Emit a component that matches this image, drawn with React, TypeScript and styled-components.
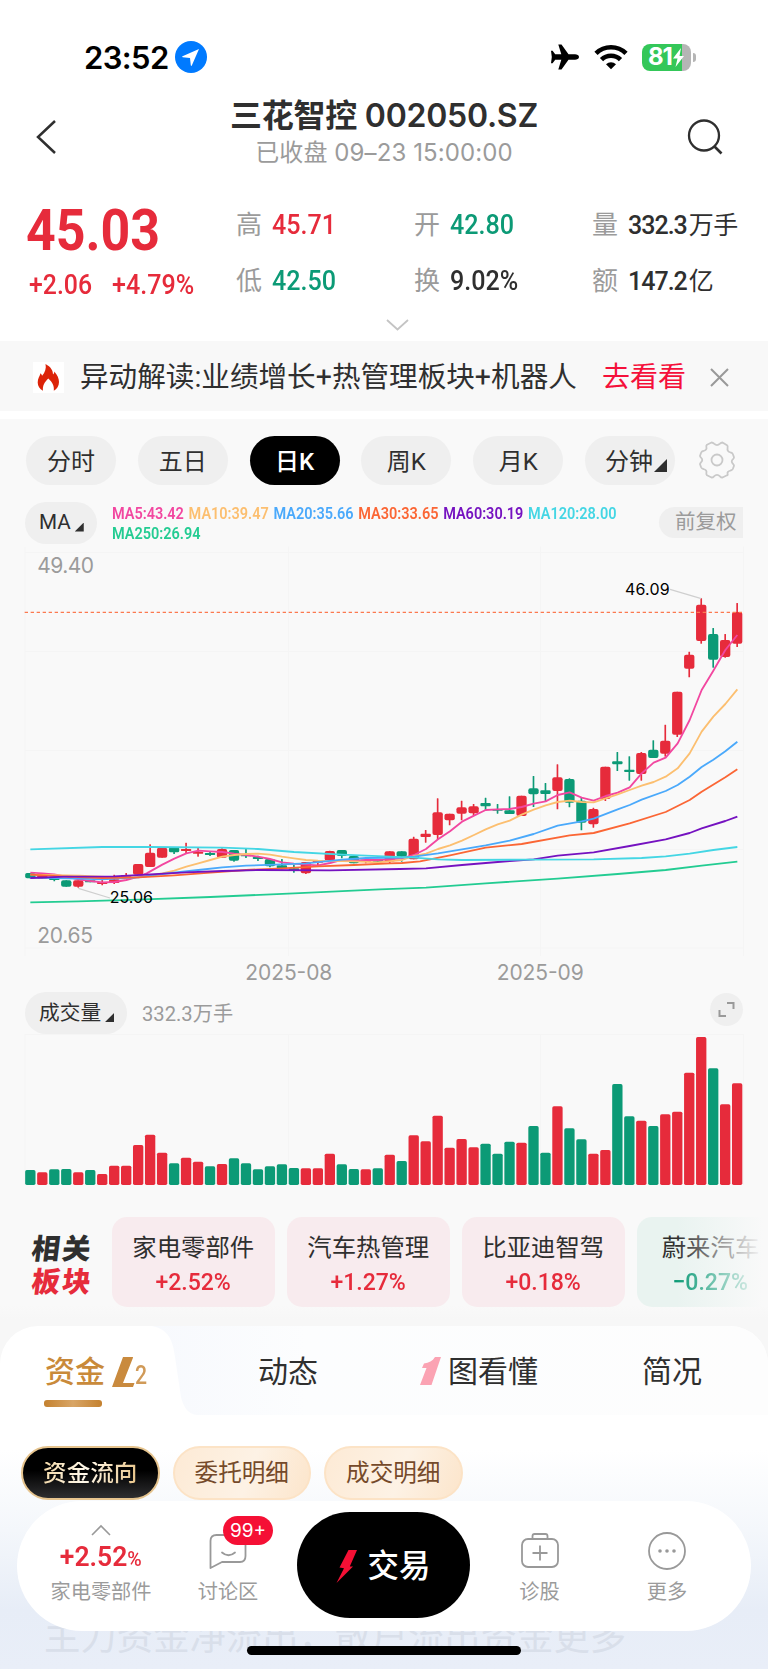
import React from "react";
import styled, { createGlobalStyle } from "styled-components";

const RED = "#e62b3b";
const GREEN = "#0c9a76";
const INK = "#2f2f2f";
const GREY = "#9b9b9b";

const Global = createGlobalStyle`
  * { box-sizing: border-box; }
  body {
    margin: 0;
    background: #fff;
    color: ${INK};
    font-family: Roboto, "Noto Sans CJK SC", sans-serif;
    -webkit-font-smoothing: antialiased;
  }
`;

const Page = styled.div`
  position: relative;
  width: 768px;
  height: 1669px;
  overflow: hidden;
  display: flex;
  flex-direction: column;
  background: linear-gradient(180deg, #fff 0, #fff 1450px, #f4f7fb 1530px, #e7edf7 1610px, #e9eef8 1669px);
`;

/* Text squeezed horizontally to resemble a narrow DIN face. */
const Num = styled.span<{ $size: number; $w: number; $s?: number; $color?: string; $weight?: number }>`
  flex: none;
  width: ${(p) => p.$w}px;
  font-size: ${(p) => p.$size}px;
  font-weight: ${(p) => p.$weight ?? 500};
  line-height: 1;
  color: ${(p) => p.$color ?? INK};
  white-space: nowrap;
  transform: scaleX(${(p) => p.$s ?? 0.92});
  transform-origin: left center;
`;

/* ---------- status bar ---------- */
const StatusBar = styled.div`
  flex: none;
  height: 90px;
  padding: 24px 72px 0 84px;
  display: flex;
  align-items: center;
`;
const Clock = styled.span`
  width: 91px;
  font: 600 31px/1 Inter, sans-serif;
  letter-spacing: -0.6px;
  color: #000;
`;
const Spacer = styled.div`
  flex: 1;
`;
const StatusIcons = styled.div`
  display: flex;
  align-items: center;
  gap: 14px;
`;
const Battery = styled.div`
  width: 49px;
  height: 27px;
  border-radius: 8px;
  background: linear-gradient(90deg, #34c759 81%, #b5b5b5 81%);
  display: flex;
  align-items: center;
  padding-left: 6px;
  color: #fff;
  font: 700 24px/1 Inter, sans-serif;
  letter-spacing: -1px;
`;
const BatteryTip = styled.div`
  width: 3px;
  height: 9px;
  margin-left: -12px;
  border-radius: 0 4px 4px 0;
  background: #b5b5b5;
`;

/* ---------- header ---------- */
const Header = styled.header`
  flex: none;
  height: 100px;
  padding: 0 45px 0 35px;
  display: flex;
  align-items: flex-start;
  justify-content: space-between;
  & > svg { margin-top: 29px; }
`;
const Titles = styled.div`
  display: flex;
  flex-direction: column;
  align-items: center;
  margin-left: 24px;
`;
const Title = styled.h1`
  margin: 8px 0 0;
  font: 600 32px/36px Inter, "Noto Sans CJK SC", sans-serif;
  white-space: nowrap;
  letter-spacing: -0.25px;
`;
const Subtitle = styled.div`
  margin-top: 4px;
  font: 400 24px/30px Inter, "Noto Sans CJK SC", sans-serif;
  letter-spacing: 0.1px;
  color: ${GREY};
  white-space: nowrap;
`;

/* ---------- quote ---------- */
const Quote = styled.section`
  flex: none;
  position: relative;
  height: 151px;
  padding: 7px 0 0 26px;
  display: flex;
`;
const PriceBox = styled.div`
  width: 210px;
  display: flex;
  flex-direction: column;
`;
const Price = styled.div`
  height: 66px;
  display: flex;
  align-items: center;
`;
const Change = styled.div`
  height: 44px;
  padding-left: 3px;
  display: flex;
  align-items: center;
  gap: 20px;
`;
const Stats = styled.div`
  display: grid;
  grid-template-columns: 178px 178px 160px;
  grid-template-rows: 56px 56px;
  height: 112px;
`;
const Stat = styled.div`
  display: flex;
  align-items: center;
  gap: 10px;
  white-space: nowrap;
`;
const StatLabel = styled.span`
  font-size: 26px;
  line-height: 1;
  color: ${GREY};
`;
const Expand = styled.svg`
  position: absolute;
  left: 386px;
  top: 129px;
`;

/* ---------- banner ---------- */
const Banner = styled.section`
  flex: none;
  height: 70px;
  margin-bottom: 8px;
  padding: 3px 39px 0 33px;
  background: #f8f8f8;
  display: flex;
  align-items: center;
`;
const FireTile = styled.div`
  width: 31px;
  height: 31px;
  background: #fff;
  display: flex;
  justify-content: center;
  align-items: center;
`;
const BannerText = styled.span`
  width: 521px;
  padding-left: 16px;
  font-size: 28.6px;
  line-height: 1;
  white-space: nowrap;
`;
const BannerLink = styled.span`
  width: 108px;
  font-size: 28px;
  line-height: 1;
  color: #f5103a;
`;

/* ---------- chart panel ---------- */
const ChartPanel = styled.section`
  flex: none;
  height: 907px;
  background: linear-gradient(180deg, #f9f9f9 0, #f9f9f9 886px, #f7f7f7 900px);
  display: flex;
  flex-direction: column;
`;
const Periods = styled.div`
  height: 83px;
  padding: 17px 33px 0 26px;
  display: flex;
  align-items: flex-start;
  gap: 21.8px;
`;
const Period = styled.div<{ $active?: boolean }>`
  flex: none;
  width: 90px;
  height: 49px;
  padding-top: 3px;
  border-radius: 25px;
  background: ${(p) => (p.$active ? "#000" : "#efefef")};
  color: ${(p) => (p.$active ? "#fff" : INK)};
  font-size: 24px;
  font-weight: ${(p) => (p.$active ? 500 : 400)};
  line-height: 1;
  display: flex;
  align-items: center;
  justify-content: center;
  white-space: nowrap;
`;
const Corner = styled.i<{ $size: number }>`
  align-self: center;
  width: ${(p) => p.$size}px;
  height: ${(p) => p.$size}px;
  margin: ${(p) => (p.$size > 10 ? 7 : p.$size)}px 0 0 ${(p) => (p.$size > 10 ? 1 : 4)}px;
  background: ${INK};
  clip-path: polygon(100% 0, 100% 100%, 0 100%);
`;
const Legend = styled.div`
  height: 41px;
  padding: 0 25px;
  display: flex;
  align-items: center;
`;
const Picker = styled.div<{ $w: number }>`
  flex: none;
  width: ${(p) => p.$w}px;
  height: 42px;
  padding-left: 14px;
  border-radius: 21px;
  background: #efefef;
  font-size: 20.7px;
  line-height: 1;
  display: flex;
  align-items: center;
  white-space: nowrap;
`;
const LegendItems = styled.div`
  flex: none;
  width: 580px;
  margin: 2px -33px 0 15px;
  display: flex;
  flex-wrap: wrap;
  column-gap: 5.2px;
  transform: scaleX(0.905);
  transform-origin: left center;
`;
const LegendItem = styled.span<{ $color: string }>`
  font-size: 16px;
  font-weight: 600;
  line-height: 20px;
  color: ${(p) => p.$color};
`;
const Adjust = styled.div`
  margin-left: auto;
  width: 84px;
  height: 31px;
  flex: none;
  border-radius: 16px 0 0 16px;
  background: #efefef;
  color: ${GREY};
  font-size: 20.5px;
  line-height: 31px;
  padding-left: 16px;
  white-space: nowrap;
`;
const VolumeHead = styled.div`
  height: 42px;
  padding: 0 25px;
  display: flex;
  align-items: center;
`;
const VolumeValue = styled.span`
  margin: 3px 0 0 15px;
  font-size: 20.2px;
  line-height: 1;
  color: ${GREY};
`;
const ExpandButton = styled.div`
  width: 33px;
  height: 33px;
  margin: -8px 0 0 auto;
  border-radius: 50%;
  background: #efefef;
  display: flex;
  align-items: center;
  justify-content: center;
`;

/* ---------- related sectors ---------- */
const Related = styled.div`
  position: relative;
  margin-top: 26px;
  height: 90px;
  padding-left: 32px;
  display: flex;
  gap: 12.5px;
  overflow: hidden;
`;
const RelatedTitle = styled.div`
  flex: none;
  width: 67.5px;
  padding-top: 13px;
  font: 900 28.5px/33px "Noto Sans CJK SC", sans-serif;
  letter-spacing: 2px;
  white-space: nowrap;
  & > div { transform: skewX(-7deg); }
`;
const Red = styled.div`
  color: ${RED};
`;
const Sector = styled.div<{ $down?: boolean }>`
  flex: none;
  width: ${(p) => (p.$down ? 147 : 162.5)}px;
  height: 90px;
  padding-top: 18px;
  border-radius: 15px;
  background: ${(p) => (p.$down ? "#e9f3f0" : "#f8ebee")};
  display: flex;
  flex-direction: column;
  align-items: center;
`;
const SectorName = styled.div`
  height: 26px;
  font-size: 24.4px;
  line-height: 26px;
  white-space: nowrap;
`;
const SectorPct = styled.div<{ $down?: boolean }>`
  margin-top: 7px;
  font-size: 24.5px;
  font-weight: 500;
  line-height: 28px;
  color: ${(p) => (p.$down ? GREEN : RED)};
  transform: scaleX(0.94);
`;
const Fade = styled.div`
  position: absolute;
  right: 0;
  top: 0;
  width: 92px;
  height: 90px;
  background: linear-gradient(90deg, rgba(249, 249, 249, 0), #f9f9f9 95%);
`;

/* ---------- content tabs ---------- */
const Panel = styled.section`
  flex: none;
  background: #f7f7f7;
`;
const TabStrip = styled.nav`
  position: relative;
  height: 89px;
  border-radius: 38px 38px 0 0;
  background: #fff;
  overflow: hidden;
`;
const StripShape = styled.svg`
  position: absolute;
  left: 0;
  top: 0;
`;
const Tabs = styled.div`
  position: relative;
  display: grid;
  grid-template-columns: 192px 192px 192px 192px;
  height: 89px;
`;
const Tab = styled.div<{ $left: number; $active?: boolean }>`
  padding: 30px 0 0 ${(p) => p.$left}px;
  display: flex;
  align-items: flex-start;
  font-size: 30px;
  line-height: 31px;
  font-weight: ${(p) => (p.$active ? 500 : 400)};
  color: ${(p) => (p.$active ? "#c98a3a" : INK)};
  white-space: nowrap;
`;
const Underline = styled.div`
  position: absolute;
  left: 44px;
  top: 74px;
  width: 58px;
  height: 7px;
  border-radius: 3px;
  background: linear-gradient(90deg, #c4812f, #d8a566 50%, #c4812f);
`;
const Level = styled.span`
  display: flex;
  align-items: flex-end;
  margin-left: 6px;
  height: 32px;
  font-size: 25px;
  line-height: 25px;
  font-weight: 500;
  color: #d09a58;
`;
const LevelDigit = styled.span`
  margin-left: -2px;
  transform: scaleX(0.85);
  transform-origin: left center;
`;
const Chips = styled.div`
  flex: none;
  margin-top: 31px;
  padding-left: 21px;
  display: flex;
  gap: 13px;
`;
const Chip = styled.div<{ $active?: boolean }>`
  width: 138.5px;
  height: 54px;
  padding-top: 2px;
  border-radius: 27px;
  border: 2px solid ${(p) => (p.$active ? "#e6c48e" : "#fce3c6")};
  background: ${(p) =>
    p.$active
      ? "linear-gradient(180deg, #000 45%, #2e2e30)"
      : "linear-gradient(110deg, #fdead5, #fdf2e5 55%, #fce5cb)"};
  display: flex;
  align-items: center;
  justify-content: center;
  font-size: 23.6px;
  line-height: 1;
  color: #754a2a;
  white-space: nowrap;
`;
const GoldText = styled.span`
  font-weight: 500;
  background: linear-gradient(100deg, #f3d9a8, #fff8ea 45%, #e8c488);
  -webkit-background-clip: text;
  background-clip: text;
  color: transparent;
`;

/* ---------- bottom dock ---------- */
const Ghost = styled.div`
  position: absolute;
  left: 44px;
  top: 1616px;
  font-size: 36.4px;
  line-height: 44px;
  color: #d9dfea;
  white-space: nowrap;
`;
const Dock = styled.div`
  position: absolute;
  left: 17px;
  top: 1501px;
  width: 734px;
  height: 130px;
  border-radius: 65px;
  background: #fff;
  display: flex;
`;
const DockItem = styled.div<{ $w: number }>`
  position: relative;
  width: ${(p) => p.$w}px;
  padding-top: 31px;
  display: flex;
  flex-direction: column;
  align-items: center;
`;
const DockLabel = styled.div`
  margin-top: auto;
  margin-bottom: 26px;
  font-size: 20.2px;
  line-height: 26px;
  color: ${GREY};
  white-space: nowrap;
`;
const IndexItem = styled(DockItem)`
  padding-top: 23px;
`;
const IndexPct = styled.div`
  margin-top: 8px;
  font-size: 27px;
  line-height: 27px;
  font-weight: 600;
  color: ${RED};
  transform: scaleX(0.98);
  & > small { font-size: 20px; font-weight: 500; }
`;
const Badge = styled.div`
  position: absolute;
  left: 38px;
  top: 15px;
  width: 50px;
  height: 29px;
  border-radius: 15px;
  background: #f51035;
  color: #fff;
  font: 400 19px/30px Inter, sans-serif;
  text-align: center;
`;
const Trade = styled.div`
  margin-top: 11px;
  width: 173px;
  height: 106px;
  border-radius: 53px;
  background: #000;
  color: #fff;
  font-size: 31.5px;
  line-height: 1;
  font-weight: 500;
  display: flex;
  align-items: center;
  justify-content: center;
  gap: 9px;
  padding-top: 3px;
`;
const HomeBar = styled.div`
  position: absolute;
  left: 247px;
  top: 1646px;
  width: 274px;
  height: 9px;
  border-radius: 5px;
  background: #000;
`;

/* ---------- data ---------- */
const STEP = 35.94;
const X0 = 91;

/* colour, body top, body bottom, high, low (y in chart units) */
type Candle = ["r" | "g", number, number, number, number];
const candles: Candle[] = [
  ["g", 939, 955, 939, 955], ["r", 946, 956, 946, 956], ["g", 954, 960, 954, 964], ["g", 961, 980, 961, 980],
  ["r", 961, 980, 961, 983], ["g", 961, 967, 961, 967], ["r", 966, 972, 960, 976], ["r", 958, 969, 944, 972],
  ["r", 945, 951, 939, 951], ["r", 912, 944, 912, 944], ["r", 878, 921, 853, 921], ["r", 863, 893, 863, 893],
  ["g", 862, 877, 862, 882], ["r", 867, 873, 848, 880], ["r", 875, 881, 863, 890], ["g", 879, 885, 873, 888],
  ["r", 867, 893, 865, 893], ["g", 870, 902, 870, 905], ["g", 883, 889, 867, 894], ["g", 891, 897, 887, 903],
  ["g", 897, 919, 897, 922], ["g", 916, 926, 897, 928], ["g", 925, 932, 914, 938], ["r", 906, 940, 906, 942],
  ["r", 903, 908, 903, 918], ["r", 873, 902, 872, 902], ["g", 870, 888, 870, 895], ["g", 888, 910, 888, 910],
  ["r", 899, 905, 895, 910], ["g", 897, 905, 897, 905], ["r", 874, 905, 874, 910], ["g", 874, 890, 874, 905],
  ["r", 836, 898, 830, 898], ["r", 821, 831, 810, 848], ["r", 757, 825, 715, 838], ["r", 761, 781, 761, 796],
  ["r", 742, 761, 722, 781], ["r", 739, 760, 732, 766], ["g", 729, 739, 713, 752], ["g", 747, 752, 732, 761],
  ["g", 751, 762, 709, 762], ["r", 707, 768, 707, 768], ["g", 685, 703, 648, 741], ["g", 691, 702, 669, 723],
  ["r", 652, 693, 613, 748], ["g", 657, 728, 655, 742], ["g", 722, 788, 713, 811], ["r", 747, 793, 743, 803],
  ["r", 620, 717, 620, 723], ["g", 604, 613, 576, 633], ["g", 629, 636, 589, 662], ["r", 579, 642, 576, 662],
  ["g", 569, 594, 541, 594], ["r", 542, 581, 494, 590], ["r", 395, 524, 395, 531], ["r", 284, 326, 275, 352],
  ["r", 134, 243, 114, 251], ["g", 222, 299, 204, 323], ["r", 240, 291, 222, 293], ["r", 156, 251, 129, 261],
];

const averages: { color: string; points: string }[] = [
  { color: "#23cc92", points: "91,1027 235,1024 415,1019 631,1011 882,1000 1140,988 1278,983 1457,970 1673,956 1853,942 1997,930 2105,917 2212,905" },
  { color: "#f247a0", points: "91,938 127,940 163,943 199,950 235,958 271,963 307,967 343,966 379,960 415,950 440,940 487,914 523,896 559,880 595,872 631,874 667,876 703,881 738,885 774,890 810,897 846,907 882,911 918,914 954,916 990,909 1020,901 1062,902 1098,900 1134,900 1170,898 1206,895 1242,885 1278,867 1314,838 1350,814 1386,785 1422,767 1457,750 1493,748 1529,747 1565,741 1601,731 1637,724 1673,705 1709,697 1745,713 1781,722 1817,708 1853,698 1889,682 1925,640 1961,608 1997,593 2033,550 2069,480 2105,390 2140,332 2176,270 2212,225" },
  { color: "#fcbf70", points: "91,944 240,947 343,952 415,952 487,940 523,932 559,920 595,910 631,900 667,890 703,885 738,882 774,881 810,884 846,890 882,895 918,900 954,902 1062,904 1134,907 1206,900 1242,888 1278,881 1314,867 1350,856 1386,842 1422,825 1457,808 1493,793 1529,782 1565,764 1601,749 1637,736 1673,726 1709,722 1745,726 1781,727 1817,715 1853,703 1889,690 1925,677 1961,666 1997,650 2033,625 2069,580 2105,515 2140,470 2176,432 2212,388" },
  { color: "#4aa9fb", points: "91,953 235,956 307,958 415,952 487,942 595,930 667,922 738,917 846,913 918,910 1026,899 1098,894 1206,893 1242,890 1314,880 1386,868 1457,856 1529,842 1601,822 1673,797 1745,784 1781,776 1853,748 1889,735 1925,719 1997,693 2033,675 2069,650 2105,621 2140,599 2176,574 2212,545" },
  { color: "#fb6635", points: "91,944 199,950 307,954 415,952 523,946 631,938 738,930 846,925 954,919 1062,915 1170,910 1206,909 1260,904 1350,886 1457,863 1565,852 1709,826 1781,819 1889,790 1997,756 2069,720 2105,695 2176,652 2212,628" },
  { color: "#7512c0", points: "91,954 199,950 343,949 451,943 559,937 667,933 774,930 990,931 1200,927 1278,925 1386,915 1529,903 1601,898 1673,887 1781,877 1889,858 1997,838 2069,819 2105,805 2176,783 2212,770" },
  { color: "#44d6e4", points: "91,868 307,861 451,861 667,863 774,867 882,876 1026,884 1170,890 1242,893 1314,898 1386,900 1601,899 1781,898 1925,894 1997,889 2069,881 2140,870 2212,861" },
];

const volumes: [string, number][] = [
  ["g", 45], ["r", 38], ["g", 47], ["g", 48], ["r", 38], ["g", 45], ["r", 33], ["r", 58], ["r", 58], ["r", 120],
  ["r", 151], ["r", 97], ["g", 65], ["r", 82], ["r", 70], ["g", 56], ["r", 63], ["g", 80], ["g", 65], ["g", 47],
  ["g", 56], ["g", 62], ["g", 51], ["r", 50], ["r", 50], ["r", 94], ["g", 62], ["g", 48], ["r", 47], ["g", 50],
  ["r", 91], ["g", 72], ["r", 149], ["r", 131], ["r", 208], ["r", 112], ["r", 138], ["r", 113], ["g", 124], ["g", 94],
  ["g", 130], ["r", 127], ["g", 177], ["g", 97], ["r", 236], ["g", 170], ["g", 137], ["r", 94], ["r", 105], ["g", 303],
  ["g", 206], ["r", 193], ["g", 177], ["r", 212], ["r", 220], ["r", 337], ["r", 444], ["g", 350], ["r", 242], ["r", 305],
];

const stats = [
  { label: "高", value: "45.71", color: RED },
  { label: "开", value: "42.80", color: GREEN },
  { label: "量", value: "332.3", unit: "万手" },
  { label: "低", value: "42.50", color: GREEN },
  { label: "换", value: "9.02%" },
  { label: "额", value: "147.2", unit: "亿" },
];
/* Figure and unit set tight, as one run. */
const Amount = styled.span`
  font-size: 25px;
  font-weight: 500;
  line-height: 1;
  letter-spacing: -1px;
`;
const Unit = styled.span`
  margin-left: 2px;
  font-weight: 400;
  letter-spacing: -0.6px;
`;

const legend = [
  ["MA5:43.42", "#f247a0"], ["MA10:39.47", "#fcbf70"], ["MA20:35.66", "#4aa9fb"], ["MA30:33.65", "#fb6635"],
  ["MA60:30.19", "#7512c0"], ["MA120:28.00", "#44d6e4"], ["MA250:26.94", "#23cc92"],
];

const fill = (c: string) => (c === "r" ? RED : GREEN);

function PriceChart() {
  return (
    <svg width="768" height="449" viewBox="0 -51 2304 1347" style={{ display: "block", flex: "none" }}>
      <g stroke="#f5f5f5" strokeWidth="3" fill="none">
        {[-23, 274, 571, 868, 1164].map((y) => (
          <line key={y} x1="75" x2="2231" y1={y} y2={y} />
        ))}
        {[75, 866, 1622, 2231].map((x) => (
          <line key={x} x1={x} x2={x} y1="-40" y2="1188" />
        ))}
      </g>
      {candles.map(([c, top, bottom, high, low], i) => {
        const x = X0 + i * STEP;
        return (
          <g key={i} fill={fill(c)}>
            <rect x={x - 2.5} y={high} width="5" height={low - high} rx="1" />
            <rect x={x - 15.5} y={top} width="31" height={bottom - top} rx={Math.min(6, (bottom - top) / 3)} />
          </g>
        );
      })}
      {averages.map((a) => (
        <polyline key={a.color} points={a.points} fill="none" stroke={a.color} strokeWidth="5.5" strokeLinejoin="round" />
      ))}
      <line x1="74" x2="2228" y1="157" y2="157" stroke="#fc7a50" strokeWidth="4" strokeDasharray="10 8" />
      <path d="M2010 88L2104 116M235 985L330 1014" stroke="#cfcfcf" strokeWidth="3.5" fill="none" />
      <g fontFamily="Inter, sans-serif" fill={GREY} fontSize="63">
        <text x="112" y="38" textLength="170">49.40</text>
        <text x="112" y="1149" textLength="167">20.65</text>
        <text x="736" y="1259" textLength="261">2025-08</text>
        <text x="1490" y="1259" textLength="261">2025-09</text>
      </g>
      <g fontFamily="Inter, sans-serif" fill="#000" fontSize="48">
        <text x="1875" y="104" textLength="134">46.09</text>
        <text x="329" y="1028" textLength="130">25.06</text>
      </g>
    </svg>
  );
}

function VolumeChart() {
  return (
    <svg width="768" height="157" viewBox="0 0 2304 471" style={{ display: "block", flex: "none" }}>
      <g stroke="#f5f5f5" strokeWidth="3" fill="none">
        <line x1="75" x2="2231" y1="2" y2="2" />
        {[75, 866, 1622, 2231].map((x) => (
          <line key={x} x1={x} x2={x} y1="0" y2="453" />
        ))}
      </g>
      {volumes.map(([c, h], i) => (
        <rect key={i} x={X0 + i * STEP - 15.5} y={453 - h} width="31" height={h} rx="5" fill={fill(c)} />
      ))}
    </svg>
  );
}

export default function App() {
  return (
    <Page>
      <Global />
      <StatusBar>
        <Clock>23:52</Clock>
        <svg width="32" height="32" viewBox="0 0 32 32">
          <circle cx="16" cy="16" r="16" fill="#007aff" />
          <path d="M24 8L7.5 15.2q-1 .7.2 1L15 17l.8 7.3q.3 1.200 1 .2z" fill="#fff" />
        </svg>
        <Spacer />
        <StatusIcons>
          <svg width="30" height="28" viewBox="0 0 30 28">
            <path
              d="M29 14c0 1.700-2 2.700-4 2.700h-6.500L11.500 26.500H8.300l3-9.800H5.200L2.600 20.300H1l.8-6.300L1 7.700h1.600l2.600 3.600h6.100l-3-9.800h3.200l7 9.800H25c2 0 4 1 4 2.700z"
              fill="#000"
            />
          </svg>
          <svg width="34" height="27" viewBox="0 0 34 27">
            <g fill="none" stroke="#000" strokeWidth="4.600">
              <path d="M2 9.400a21.500 21.500 0 0 1 30 0" />
              <path d="M7.500 15.600a13.500 13.500 0 0 1 19 0" />
            </g>
            <path d="M12 20.300a7.400 7.400 0 0 1 10 0l-5 5z" fill="#000" />
          </svg>
          <Battery>
            81
            <svg width="13" height="19" viewBox="0 0 13 19">
              <path d="M9 0L1 10.500h4.500L3.500 19 12 8H7.500z" fill="#fff" />
            </svg>
          </Battery>
          <BatteryTip />
        </StatusIcons>
      </StatusBar>

      <Header>
        <svg width="22" height="36" viewBox="0 0 22 36">
          <path d="M20 2L3 18l17 16" fill="none" stroke={INK} strokeWidth="2.500" />
        </svg>
        <Titles>
          <Title>三花智控 002050.SZ</Title>
          <Subtitle>已收盘 09–23 15:00:00</Subtitle>
        </Titles>
        <svg width="36" height="37" viewBox="0 0 36 37">
          <circle cx="17" cy="16.500" r="15" fill="none" stroke={INK} strokeWidth="2.300" />
          <path d="M27 27l7.500 7.500" stroke={INK} strokeWidth="2.600" />
        </svg>
      </Header>

      <Quote>
        <PriceBox>
          <Price>
            <Num $size={57} $w={140} $s={0.91} $weight={700} $color={RED}>45.03</Num>
          </Price>
          <Change>
            <Num $size={27} $w={63} $s={0.92} $color={RED}>+2.06</Num>
            <Num $size={27} $w={83} $s={0.93} $color={RED}>+4.79%</Num>
          </Change>
        </PriceBox>
        <Stats>
          {stats.map((s) => (
            <Stat key={s.label}>
              <StatLabel>{s.label}</StatLabel>
              {s.unit ? (
                <Amount>{s.value}<Unit>{s.unit}</Unit></Amount>
              ) : (
                <Num $size={27} $w={64} $s={0.93} $color={s.color}>{s.value}</Num>
              )}
            </Stat>
          ))}
        </Stats>
        <Expand width="23" height="12" viewBox="0 0 23 12">
          <path d="M1 1l10.500 9.500L22 1" fill="none" stroke="#c4c4c4" strokeWidth="1.800" />
        </Expand>
      </Quote>

      <Banner>
        <FireTile>
          <svg width="23" height="27" viewBox="0 0 23 27">
            <path
              d="M8.500 0c5.500 3 7.500 6.500 7.500 10.500 1-.8 1.300-1.800 1.300-3C20.500 11 22 14.500 22 18c0 4-2 7-5.200 8.800.6-4.800-1.300-8.600-5.500-12.300-3.600 3.500-6 7-5.300 12.300C2.600 25 .7 22 .7 18.500c0-4 2-6 2.800-9.200.9.700 1.400 1.500 1.600 2.500C8 8.500 9.500 4.500 8.500 0z"
              fill="#dc2308"
            />
          </svg>
        </FireTile>
        <BannerText>异动解读:业绩增长+热管理板块+机器人</BannerText>
        <Spacer />
        <BannerLink>去看看</BannerLink>
        <svg width="19" height="19" viewBox="0 0 19 19">
          <path d="M1 1l17 17M18 1L1 18" stroke="#999" strokeWidth="2" />
        </svg>
      </Banner>

      <ChartPanel>
        <Periods>
          <Period>分时</Period>
          <Period>五日</Period>
          <Period $active>日K</Period>
          <Period>周K</Period>
          <Period>月K</Period>
          <Period>
            <span style={{ marginLeft: 12 }}>分钟</span>
            <Corner $size={13} />
          </Period>
          <svg width="40" height="38" viewBox="0 0 40 38" style={{ marginTop: 5, flex: "none" }}>
            <path
              d="M14.500 1.500q1.500 0 2.500 1.200 3 2.800 6 0 1-1.200 2.500-1.200l4.500 2.700q1 1 .6 2.500-.8 3.800 3 4.800 1.700.3 2.200 1.500l1.200 3.200q0 1-1 2-2.500 2.300 0 4.600 1 1 1 2L35.800 28q-.5 1.200-2.200 1.500-3.800 1-3 3.300.4 1.500-.6 1.500L25.500 36.500q-1.500 0-2.500-1.200-3-2.800-6 0-1 1.200-2.500 1.200L10 34.300q-1-1-.6-2.500.8-2.800-3-3.800-1.700-.3-2.200-1.500L3 23.300q0-1 1-2 2.500-2.300 0-4.600-1-1-1-2L4.200 11.500Q4.700 10.300 6.400 10q3.800-1 3-3.800Q9 4.700 10 3.700z"
              fill="none" stroke="#c9c9c9" strokeWidth="1.800" strokeLinejoin="round"
            />
            <circle cx="20" cy="19" r="5.500" fill="none" stroke="#c9c9c9" strokeWidth="1.800" />
          </svg>
        </Periods>

        <Legend>
          <Picker $w={72}>MA<Corner $size={9} /></Picker>
          <LegendItems>
            {legend.map(([text, color]) => (
              <LegendItem key={text} $color={color}>{text}</LegendItem>
            ))}
          </LegendItems>
          <Adjust>前复权</Adjust>
        </Legend>

        <PriceChart />

        <VolumeHead>
          <Picker $w={102}>成交量<Corner $size={9} /></Picker>
          <VolumeValue>332.3万手</VolumeValue>
          <ExpandButton>
            <svg width="17" height="17" viewBox="0 0 17 17">
              <path d="M9 2h6.500v6M1.500 9v6H8" fill="none" stroke="#999" strokeWidth="2" />
            </svg>
          </ExpandButton>
        </VolumeHead>

        <VolumeChart />

        <Related>
          <RelatedTitle>
            <div>相关</div>
            <Red>板块</Red>
          </RelatedTitle>
          <Sector><SectorName>家电零部件</SectorName><SectorPct>+2.52%</SectorPct></Sector>
          <Sector><SectorName>汽车热管理</SectorName><SectorPct>+1.27%</SectorPct></Sector>
          <Sector><SectorName>比亚迪智驾</SectorName><SectorPct>+0.18%</SectorPct></Sector>
          <Sector $down><SectorName>蔚来汽车</SectorName><SectorPct $down>−0.27%</SectorPct></Sector>
          <Fade />
        </Related>
      </ChartPanel>

      <Panel>
        <TabStrip>
          <StripShape width="768" height="89" viewBox="0 0 768 89">
            <defs>
              <linearGradient id="strip" x1="0" x2="1">
                <stop offset="0" stopColor="#f7f9fd" />
                <stop offset=".25" stopColor="#fcfdfe" />
                <stop offset="1" stopColor="#fdfdfd" />
              </linearGradient>
            </defs>
            <path d="M152 0C168 3 173 14 175 31l6 40c3 12 8 17 16 18h571V0z" fill="url(#strip)" />
          </StripShape>
          <Tabs>
            <Tab $left={45} $active>
              资金
              <Level>
                <svg width="26" height="32" viewBox="0 0 26 32">
                  <path d="M12 1h10q0 1-.5 2L12 27h11.500L22 31H1z" fill="#c98a3e" />
                </svg>
                <LevelDigit>2</LevelDigit>
              </Level>
            </Tab>
            <Tab $left={66}>动态</Tab>
            <Tab $left={36}>
              <svg width="22" height="29" viewBox="0 0 22 29" style={{ margin: "1px 6px 0 0" }}>
                <path d="M21 0L11.500 28H0L6.500 11H2L4 6.500C9 6 12.500 4 15 0z" fill="#fba3b3" />
              </svg>
              图看懂
            </Tab>
            <Tab $left={66}>简况</Tab>
          </Tabs>
          <Underline />
        </TabStrip>
      </Panel>

      <Chips>
        <Chip $active><GoldText>资金流向</GoldText></Chip>
        <Chip>委托明细</Chip>
        <Chip>成交明细</Chip>
      </Chips>

      <Ghost>主力资金净流出，散户流出资金更多</Ghost>
      <Dock>
        <IndexItem $w={168}>
          <svg width="20" height="12" viewBox="0 0 20 12">
            <path d="M1 11l9-9 9 9" fill="none" stroke="#999" strokeWidth="1.600" />
          </svg>
          <IndexPct>+2.52<small>%</small></IndexPct>
          <DockLabel>家电零部件</DockLabel>
        </IndexItem>
        <DockItem $w={86}>
          <svg width="38" height="38" viewBox="0 0 38 38">
            <g fill="none" stroke="#999" strokeWidth="1.800" strokeLinecap="round" strokeLinejoin="round">
              <path d="M1.500 36V9q0-6 6-6H31q5.500 0 5.500 6v15q0 6-5.500 6H13z" />
              <path d="M13 20.500q6.500 5.500 13 0" />
            </g>
          </svg>
          <DockLabel>讨论区</DockLabel>
          <Badge>99+</Badge>
        </DockItem>
        <DockItem $w={26} />
        <Trade>
          <svg width="22" height="35" viewBox="0 0 22 35">
            <path d="M12.500 1H21l-7.200 16.500H17L.5 34 8 19.200l-4.500-.7z" fill="#f51035" />
          </svg>
          交易
        </Trade>
        <DockItem $w={139}>
          <svg width="38" height="37" viewBox="0 0 38 37">
            <g fill="none" stroke="#999" strokeWidth="1.800">
              <rect x="1" y="7" width="36" height="28" rx="6" />
              <path d="M11.500 7V4q0-2 2-2h11q2 0 2 2v3M19 13.500v15M11.500 21h15" />
            </g>
          </svg>
          <DockLabel>诊股</DockLabel>
        </DockItem>
        <DockItem $w={116}>
          <svg width="38" height="38" viewBox="0 0 38 38">
            <circle cx="19" cy="19" r="18" fill="none" stroke="#999" strokeWidth="1.800" />
            <g fill="#999">
              <circle cx="12" cy="19" r="1.800" />
              <circle cx="19" cy="19" r="1.800" />
              <circle cx="26" cy="19" r="1.800" />
            </g>
          </svg>
          <DockLabel>更多</DockLabel>
        </DockItem>
      </Dock>
      <HomeBar />
    </Page>
  );
}
